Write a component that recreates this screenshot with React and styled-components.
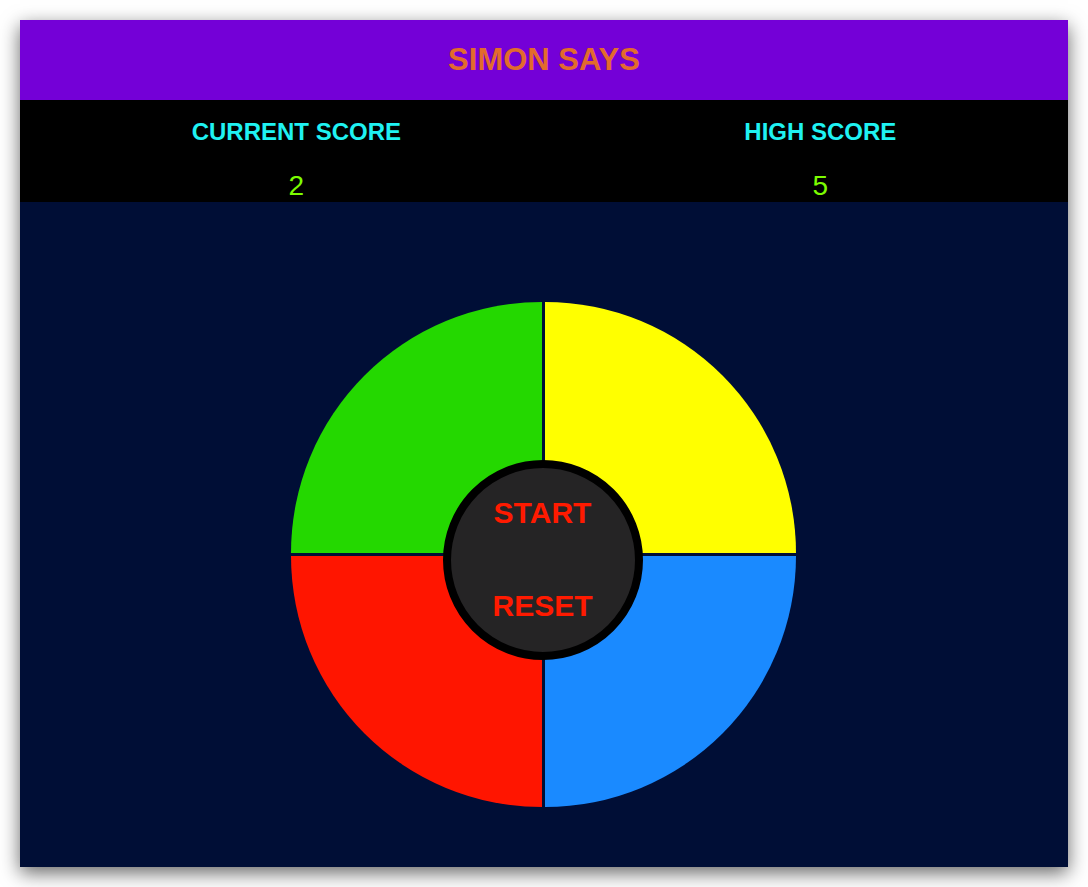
import React from "react";
import styled, { createGlobalStyle } from "styled-components";

const GlobalStyle = createGlobalStyle`
  html, body {
    margin: 0;
    padding: 0;
    background: #ffffff;
  }
  body {
    font-family: "Liberation Sans", Arial, Helvetica, sans-serif;
  }
`;

const Page = styled.div`
  padding: 20px;
  box-sizing: border-box;
  width: 1088px;
  height: 887px;
`;

const Frame = styled.div`
  width: 1048px;
  height: 847px;
  display: flex;
  flex-direction: column;
  background: #000e36;
  box-shadow: 0 6px 18px rgba(0, 0, 0, 0.6);
`;

const Header = styled.header`
  height: 80px;
  flex: none;
  background: #7400d7;
  display: flex;
  align-items: center;
  justify-content: center;
`;

const Title = styled.h1`
  margin: 0;
  font-size: 31px;
  font-weight: 700;
  color: #e26b2d;
  letter-spacing: 0;
`;

const Scores = styled.section`
  flex: none;
  height: 102px;
  box-sizing: border-box;
  background: #000000;
  display: flex;
  justify-content: space-around;
  padding-top: 18px;
`;

const ScoreColumn = styled.div`
  display: flex;
  flex-direction: column;
  align-items: center;
  gap: 24px;
`;

const ScoreLabel = styled.div`
  font-size: 24px;
  font-weight: 700;
  color: #1ff2f2;
  line-height: 27.6px;
`;

const ScoreValue = styled.div`
  font-size: 28px;
  font-weight: 400;
  color: #7cfc00;
  line-height: 32px;
`;

const Stage = styled.main`
  flex: 1;
  display: flex;
  justify-content: center;
  padding-top: 100px;
  padding-right: 2px;
`;

const Board = styled.div`
  position: relative;
  width: 505px;
  height: 505px;
  display: grid;
  grid-template-columns: 251px 251px;
  grid-template-rows: 251px 251px;
  gap: 3px;
`;

const radii = {
  tl: "100% 0 0 0",
  tr: "0 100% 0 0",
  bl: "0 0 0 100%",
  br: "0 0 100% 0",
};

const Pad = styled.button`
  border: none;
  padding: 0;
  margin: 0;
  cursor: pointer;
  background: ${(p) => p.$color};
  border-radius: ${(p) => radii[p.$corner]};
`;

const Hub = styled.div`
  position: absolute;
  left: 152px;
  top: 158px;
  width: 200px;
  height: 200px;
  box-sizing: border-box;
  border-radius: 50%;
  border: 8px solid #000000;
  background: #252425;
  display: flex;
  flex-direction: column;
  align-items: center;
  padding-top: 28px;
  gap: 58px;
`;

const HubButton = styled.button`
  background: none;
  border: none;
  padding: 0;
  margin: 0;
  cursor: pointer;
  font-family: "Liberation Sans", Arial, Helvetica, sans-serif;
  font-size: 30px;
  font-weight: 700;
  line-height: 34.5px;
  color: #ff1a00;
`;

export default function App() {
  return (
    <>
      <GlobalStyle />
      <Page>
        <Frame>
          <Header>
            <Title>SIMON SAYS</Title>
          </Header>
          <Scores>
            <ScoreColumn>
              <ScoreLabel>CURRENT SCORE</ScoreLabel>
              <ScoreValue>2</ScoreValue>
            </ScoreColumn>
            <ScoreColumn>
              <ScoreLabel>HIGH SCORE</ScoreLabel>
              <ScoreValue>5</ScoreValue>
            </ScoreColumn>
          </Scores>
          <Stage>
            <Board>
              <Pad $corner="tl" $color="#24d800" aria-label="green" />
              <Pad $corner="tr" $color="#ffff00" aria-label="yellow" />
              <Pad $corner="bl" $color="#ff1500" aria-label="red" />
              <Pad $corner="br" $color="#1a8aff" aria-label="blue" />
              <Hub>
                <HubButton>START</HubButton>
                <HubButton>RESET</HubButton>
              </Hub>
            </Board>
          </Stage>
        </Frame>
      </Page>
    </>
  );
}
